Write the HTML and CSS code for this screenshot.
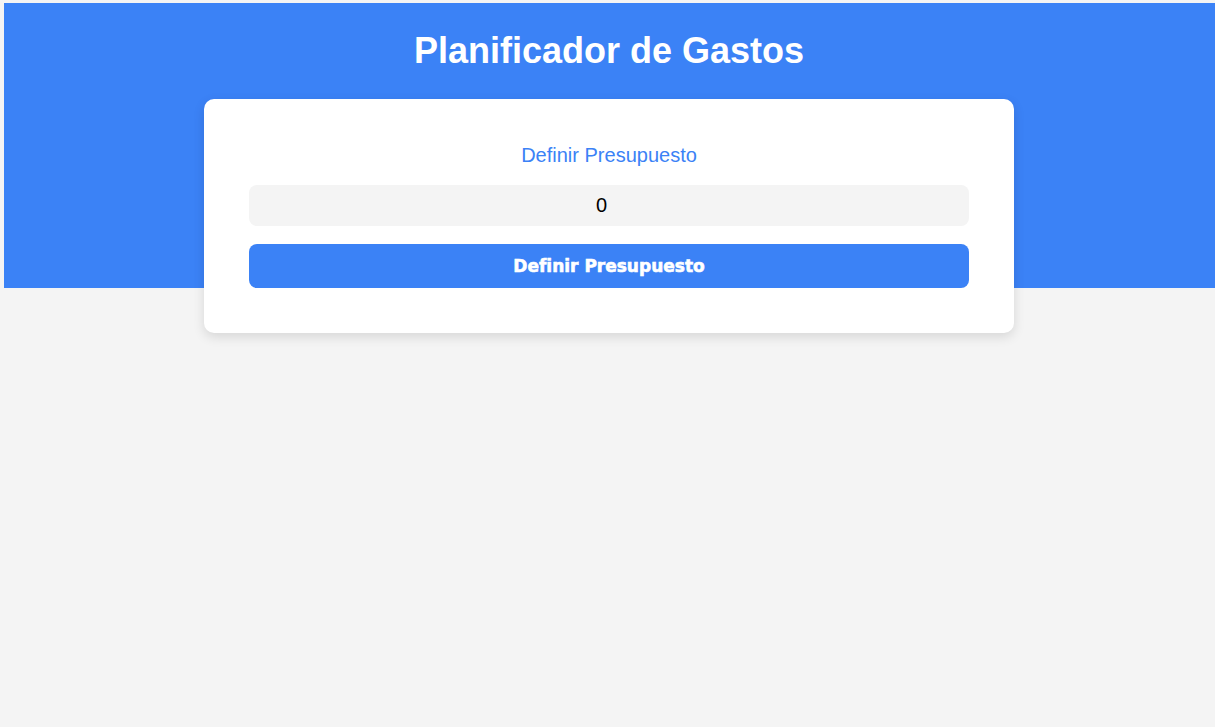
FILE: index.html
```html
<!DOCTYPE html>
<html lang="es">
<head>
<meta charset="utf-8">
<title>Planificador de Gastos</title>
<link rel="stylesheet" href="styles.css">
</head>
<body>
  <header class="header">
    <h1 class="header-title">Planificador de Gastos</h1>
  </header>
  <main class="main">
    <form class="card">
      <label class="card-label" for="budget">Definir Presupuesto</label>
      <input class="card-input" id="budget" type="number" value="0">
      <button class="card-button" type="button">Definir Presupuesto</button>
    </form>
  </main>
</body>
</html>
```

FILE: styles.css
```css
html {
  background: #f4f4f4;
}
body {
  margin: 3px 0 0 4px;
  background: #f4f4f4;
  font-family: "Liberation Sans", Arial, sans-serif;
  min-height: 724px;
}
.header {
  background: #3b82f6;
  height: 285px;
  display: flex;
  justify-content: center;
  padding-right: 1px;
}
.header-title {
  margin: 28px 0 0;
  color: #ffffff;
  font-size: 36px;
  font-weight: 700;
  line-height: 40px;
}
.main {
  display: flex;
  justify-content: center;
  margin-top: -189px;
  padding-right: 1px;
}
.card {
  width: 810px;
  box-sizing: border-box;
  background: #ffffff;
  border-radius: 10px;
  box-shadow: 0 4px 12px rgba(0, 0, 0, 0.12);
  padding: 42px 45px 45px;
  display: flex;
  flex-direction: column;
  align-items: stretch;
}
.card-label {
  color: #3b82f6;
  font-size: 20px;
  text-align: center;
  line-height: 28px;
}
.card-input {
  margin-top: 16px;
  height: 41px;
  box-sizing: border-box;
  border: none;
  border-radius: 8px;
  background: #f4f4f4;
  text-align: center;
  font-family: "Liberation Sans", Arial, sans-serif;
  font-size: 20px;
  color: #000;
  outline: none;
}
.card-button {
  margin-top: 18px;
  height: 44px;
  border: none;
  border-radius: 8px;
  background: #3b82f6;
  color: #ffffff;
  font-family: "DejaVu Sans", sans-serif;
  font-size: 17px;
  font-weight: 700;
  -webkit-text-stroke: 0.6px #ffffff;
  cursor: pointer;
}
```
